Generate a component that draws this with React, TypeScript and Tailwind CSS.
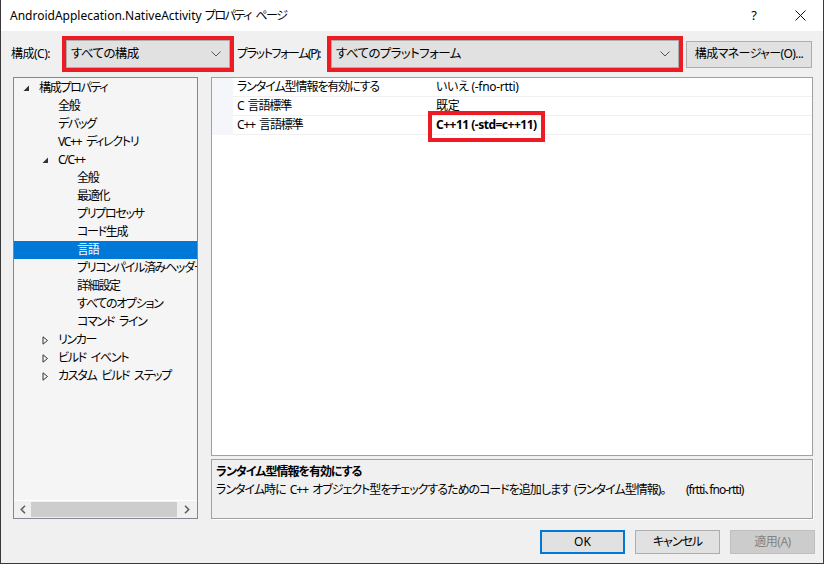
import React from "react";

const FONT = "font-['Noto_Sans','Noto_Sans_CJK_JP',sans-serif] [font-feature-settings:'palt']";

type TreeItem = { label: string; level: 0 | 1 | 2; exp?: "open" | "closed"; selected?: boolean };

const tree: TreeItem[] = [
  { label: "構成プロパティ", level: 0, exp: "open" },
  { label: "全般", level: 1 },
  { label: "デバッグ", level: 1 },
  { label: "VC++ ディレクトリ", level: 1 },
  { label: "C/C++", level: 1, exp: "open" },
  { label: "全般", level: 2 },
  { label: "最適化", level: 2 },
  { label: "プリプロセッサ", level: 2 },
  { label: "コード生成", level: 2 },
  { label: "言語", level: 2, selected: true },
  { label: "プリコンパイル済みヘッダー", level: 2 },
  { label: "詳細設定", level: 2 },
  { label: "すべてのオプション", level: 2 },
  { label: "コマンド ライン", level: 2 },
  { label: "リンカー", level: 1, exp: "closed" },
  { label: "ビルド イベント", level: 1, exp: "closed" },
  { label: "カスタム ビルド ステップ", level: 1, exp: "closed" },
];

const indent = ["pl-[9px]", "pl-[28px]", "pl-[47px]"];

function Expander({ kind }: { kind?: "open" | "closed" }) {
  return (
    <span className="w-[16px] h-[18px] flex items-center shrink-0">
      {kind === "open" && (
        <svg width="7" height="7" viewBox="0 0 7 7">
          <path d="M6 0.5 L6 6 L0.5 6 Z" fill="#333" />
        </svg>
      )}
      {kind === "closed" && (
        <svg width="7" height="9" viewBox="0 0 7 9">
          <path d="M1 0.8 L5.5 4.5 L1 8.2 Z" fill="none" stroke="#333" strokeWidth="1" />
        </svg>
      )}
    </span>
  );
}

function Chevron() {
  return (
    <svg width="10" height="6" viewBox="0 0 10 6" className="shrink-0">
      <path d="M0.5 0.5 L5 5 L9.5 0.5" fill="none" stroke="#555" strokeWidth="1" />
    </svg>
  );
}

function Combo({ text, width }: { text: string; width: string }) {
  return (
    <div className={`${width} h-[36px] border-[4px] border-[#ed1c24] shrink-0`}>
      <div className="h-full border border-[#adadad] bg-[#e1e1e1] flex items-center pl-[4px] pr-[8px] justify-between text-[12.5px] tracking-[-0.6px]">
        <span>{text}</span>
        <Chevron />
      </div>
    </div>
  );
}

const rows = [
  { name: "ランタイム型情報を有効にする", value: "いいえ (-fno-rtti)" },
  { name: "C 言語標準", value: "既定" },
  { name: "C++ 言語標準", value: "C++11 (-std=c++11)", bold: true },
];

export default function App() {
  return (
    <div className={`${FONT} w-[824px] h-[564px] bg-[#f0f0f0] flex flex-col text-[12px] text-black border-x border-b border-[#3a3a3a] overflow-hidden`}>
      {/* title bar */}
      <div className="h-[31px] bg-white flex items-center pl-[9px] shrink-0">
        <span className="flex-1">
          AndroidApplecation.NativeActivity{" "}
          <span className="tracking-[-1.5px] [word-spacing:3px]">プロパティ ページ</span>
        </span>
        <span className="text-[13px] mr-[38px]">?</span>
        <svg width="11" height="11" viewBox="0 0 11 11" className="mr-[17px]">
          <path d="M0.5 0.5 L10.5 10.5 M10.5 0.5 L0.5 10.5" stroke="#111" strokeWidth="1" />
        </svg>
      </div>

      {/* toolbar */}
      <div className="h-[46px] flex items-center pl-[10px] shrink-0 whitespace-nowrap">
        <span className="w-[51px] shrink-0 tracking-[-0.5px]">構成(C):</span>
        <Combo text="すべての構成" width="w-[172px]" />
        <span className="ml-[3px] w-[90px] shrink-0 tracking-[-1.4px]">プラットフォーム(P):</span>
        <Combo text="すべてのプラットフォーム" width="w-[356px]" />
        <button className="ml-[3px] w-[126px] h-[27px] border border-[#adadad] bg-[#e1e1e1] text-[12px] tracking-[-0.6px]">
          構成マネージャー(O)...
        </button>
      </div>

      {/* main */}
      <div className="h-[442px] flex pl-[12px] shrink-0">
        {/* tree */}
        <div className="w-[185px] h-full border border-[#828790] bg-[#f5f5f5] flex flex-col shrink-0">
          <div className="flex-1 overflow-hidden pt-[1px] whitespace-nowrap tracking-[-1.3px] [word-spacing:3px]">
            {tree.map((t, i) => (
              <div
                key={i}
                className={`h-[18px] flex items-center ${indent[t.level]} ${t.selected ? "bg-[#0078d7] text-white" : ""}`}
              >
                <Expander kind={t.exp} />
                <span>{t.label}</span>
              </div>
            ))}
          </div>
          <div className="h-[18px] border-t border-white bg-[#f0f0f0] flex items-center shrink-0">
            <span className="w-[17px] flex justify-center">
              <svg width="6" height="9" viewBox="0 0 6 9">
                <path d="M5 0.8 L1.3 4.5 L5 8.2" fill="none" stroke="#606060" strokeWidth="1.6" />
              </svg>
            </span>
            <div className="w-[146px] h-[15px] bg-[#cdcdcd]" />
            <span className="flex-1 flex justify-center">
              <svg width="6" height="9" viewBox="0 0 6 9">
                <path d="M1 0.8 L4.7 4.5 L1 8.2" fill="none" stroke="#606060" strokeWidth="1.6" />
              </svg>
            </span>
          </div>
        </div>

        {/* right column */}
        <div className="ml-[13px] w-[602px] flex flex-col shrink-0">
          <div className="relative h-[379px] border border-[#a0a0a0] bg-white">
            {rows.map((r, i) => (
              <div key={i} className="flex h-[19px]">
                <div className="w-[21px] bg-[#f4f6fa] shrink-0" />
                <div className="flex-1 flex border-b border-[#f0f0f4]">
                  <div className="w-[199px] pl-[4px] flex items-center shrink-0 tracking-[-1.1px] [word-spacing:2px]">{r.name}</div>
                  <div className={`pl-[4px] flex items-center ${r.bold ? "font-bold tracking-[-0.5px]" : "tracking-[-0.3px]"}`}>
                    {r.value}
                  </div>
                </div>
              </div>
            ))}
            <div className="absolute left-[216px] top-[33px] w-[117px] h-[31px] border-[4px] border-[#ed1c24]" />
          </div>
          <div className="mt-[3px] h-[60px] border border-[#a0a0a0] bg-[#f0f0f0] shadow-[1px_1px_0_#ffffff] pl-[4px] pt-[3px]">
            <div className="font-bold leading-[18px] tracking-[-1px]">ランタイム型情報を有効にする</div>
            <div className="leading-[18px] tracking-[-1px] [word-spacing:2px] whitespace-nowrap">
              ランタイム時に C++ オブジェクト型をチェックするためのコードを追加します (ランタイム型情報)。 &nbsp;&nbsp;&nbsp; (frtti、fno-rtti)
            </div>
          </div>
        </div>
      </div>

      {/* buttons */}
      <div className="flex justify-end pr-[8px] pt-[11px] gap-[10px]">
        <button className="w-[85px] h-[24px] border-2 border-[#0078d7] bg-[#e1e1e1]">OK</button>
        <button className="w-[85px] h-[24px] border border-[#adadad] bg-[#e1e1e1] tracking-[-1px]">キャンセル</button>
        <button className="w-[85px] h-[24px] border border-[#bfbfbf] bg-[#cccccc] text-[#838383] tracking-[-0.5px]">適用(A)</button>
      </div>
    </div>
  );
}
